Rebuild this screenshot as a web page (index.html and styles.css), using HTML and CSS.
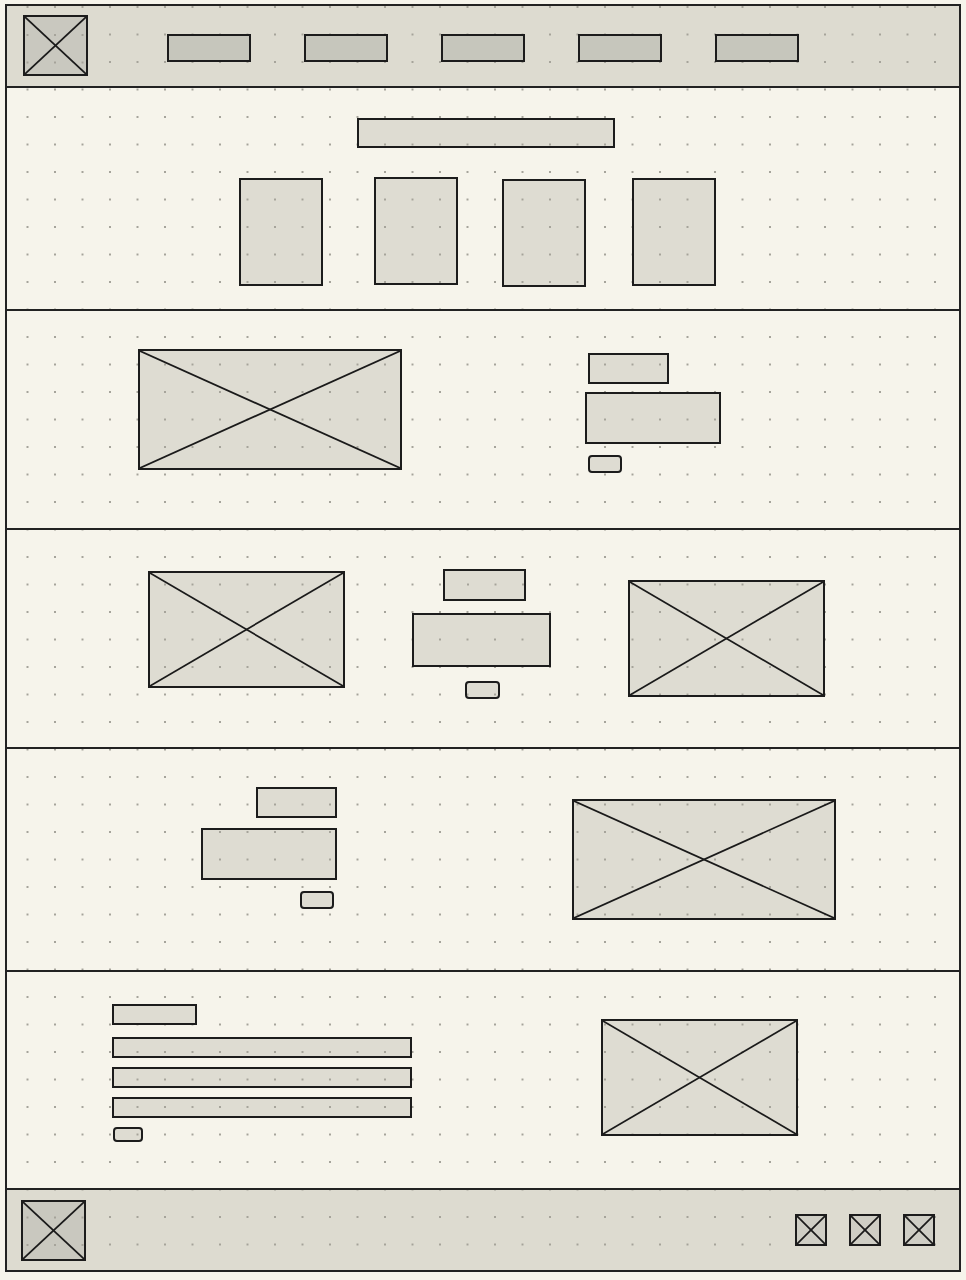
FILE: index.html
```html
<!DOCTYPE html>
<html lang="en">
<head>
    <meta charset="UTF-8">
    <meta name="viewport" content="width=device-width, initial-scale=1.0">
    <title>Wireframe</title>
    <link rel="stylesheet" href="styles.css">
</head>
<body>
    <div class="page">
        <header class="top-bar">
            <div class="box logo x-box">
                <svg viewBox="0 0 100 100" preserveAspectRatio="none"><line x1="0" y1="0" x2="100" y2="100"/><line x1="100" y1="0" x2="0" y2="100"/></svg>
            </div>
            <nav class="nav">
                <div class="box nav-item"></div>
                <div class="box nav-item"></div>
                <div class="box nav-item"></div>
                <div class="box nav-item"></div>
                <div class="box nav-item"></div>
            </nav>
        </header>

        <section class="section intro">
            <div class="box intro-title"></div>
            <div class="cards">
                <div class="box card"></div>
                <div class="box card"></div>
                <div class="box card"></div>
                <div class="box card"></div>
            </div>
        </section>

        <section class="section feature-one">
            <div class="box x-box wide-img">
                <svg viewBox="0 0 100 100" preserveAspectRatio="none"><line x1="0" y1="0" x2="100" y2="100"/><line x1="100" y1="0" x2="0" y2="100"/></svg>
            </div>
            <div class="text-group">
                <div class="box heading"></div>
                <div class="box paragraph"></div>
                <div class="box button"></div>
            </div>
        </section>

        <section class="section feature-two">
            <div class="box x-box mid-img">
                <svg viewBox="0 0 100 100" preserveAspectRatio="none"><line x1="0" y1="0" x2="100" y2="100"/><line x1="100" y1="0" x2="0" y2="100"/></svg>
            </div>
            <div class="text-group centered">
                <div class="box heading"></div>
                <div class="box paragraph"></div>
                <div class="box button"></div>
            </div>
            <div class="box x-box mid-img right-img">
                <svg viewBox="0 0 100 100" preserveAspectRatio="none"><line x1="0" y1="0" x2="100" y2="100"/><line x1="100" y1="0" x2="0" y2="100"/></svg>
            </div>
        </section>

        <section class="section feature-three">
            <div class="text-group right">
                <div class="box heading"></div>
                <div class="box paragraph"></div>
                <div class="box button"></div>
            </div>
            <div class="box x-box wide-img">
                <svg viewBox="0 0 100 100" preserveAspectRatio="none"><line x1="0" y1="0" x2="100" y2="100"/><line x1="100" y1="0" x2="0" y2="100"/></svg>
            </div>
        </section>

        <section class="section article">
            <div class="text-group list">
                <div class="box small-heading"></div>
                <div class="box line"></div>
                <div class="box line"></div>
                <div class="box line"></div>
                <div class="box button small"></div>
            </div>
            <div class="box x-box mid-img">
                <svg viewBox="0 0 100 100" preserveAspectRatio="none"><line x1="0" y1="0" x2="100" y2="100"/><line x1="100" y1="0" x2="0" y2="100"/></svg>
            </div>
        </section>

        <footer class="bottom-bar">
            <div class="box logo x-box">
                <svg viewBox="0 0 100 100" preserveAspectRatio="none"><line x1="0" y1="0" x2="100" y2="100"/><line x1="100" y1="0" x2="0" y2="100"/></svg>
            </div>
            <div class="socials">
                <div class="box x-box social"><svg viewBox="0 0 100 100" preserveAspectRatio="none"><line x1="0" y1="0" x2="100" y2="100"/><line x1="100" y1="0" x2="0" y2="100"/></svg></div>
                <div class="box x-box social"><svg viewBox="0 0 100 100" preserveAspectRatio="none"><line x1="0" y1="0" x2="100" y2="100"/><line x1="100" y1="0" x2="0" y2="100"/></svg></div>
                <div class="box x-box social"><svg viewBox="0 0 100 100" preserveAspectRatio="none"><line x1="0" y1="0" x2="100" y2="100"/><line x1="100" y1="0" x2="0" y2="100"/></svg></div>
            </div>
        </footer>
    </div>
</body>
</html>
```

FILE: styles.css
```css
* {
    box-sizing: border-box;
}
body {
    margin: 0;
    background-color: #f6f4eb;
    height: 1280px;
    overflow: hidden;
}
.page, .top-bar, .bottom-bar, .box {
    background-image: radial-gradient(circle, #a5a39a 0.9px, transparent 1.5px);
    background-size: 27.5px 27.5px;
    background-position: 13.75px -6.75px;
    background-attachment: fixed;
}
.page {
    margin: 4px 0 0 5px;
    width: 956px;
    border: 2px solid #222;
    background-color: #f6f4eb;
}
.box {
    border: 2px solid #1c1c1c;
    background-color: #dedcd2;
}
.x-box svg {
    display: block;
    width: 100%;
    height: 100%;
}
.x-box line {
    stroke: #1a1a1a;
    stroke-width: 1.7;
    vector-effect: non-scaling-stroke;
}

/* header */
.top-bar {
    height: 82px;
    display: flex;
    align-items: center;
    background-color: #dddbd0;
    border-bottom: 2px solid #222;
}
.logo {
    width: 65px;
    height: 61px;
    margin-left: 16px;
    background-color: #c9c8bf;
}
.top-bar .logo {
    margin-top: -2px;
}
.nav {
    display: flex;
    gap: 53px;
    margin: 4px 0 0 79px;
}
.nav-item {
    width: 84px;
    height: 28px;
    background-color: #c6c6bc;
}

/* sections */
.section {
    display: flex;
    align-items: flex-start;
    border-bottom: 2px solid #222;
}
.intro {
    height: 223px;
    flex-direction: column;
    align-items: flex-start;
    padding: 30px 0 0 350px;
}
.intro-title {
    width: 258px;
    height: 30px;
}
.cards {
    display: flex;
    align-items: flex-start;
    margin: 30px 0 0 -118px;
}
.card {
    width: 84px;
    height: 108px;
}
.card:nth-child(2) {
    margin: -1px 0 0 51px;
}
.card:nth-child(3) {
    margin: 1px 0 0 44px;
}
.card:nth-child(4) {
    margin-left: 46px;
}
.text-group {
    display: flex;
    flex-direction: column;
    align-items: flex-start;
}
.heading {
    width: 81px;
    height: 31px;
    margin-left: 3px;
}
.paragraph {
    width: 136px;
    height: 52px;
    margin-top: 8px;
}
.button {
    width: 34px;
    height: 18px;
    margin: 11px 0 0 3px;
    border-radius: 4px;
    border-width: 2.5px;
}
.wide-img {
    width: 264px;
    height: 121px;
}
.mid-img {
    width: 197px;
    height: 117px;
}

.feature-one {
    height: 219px;
    padding: 38px 0 0 131px;
}
.feature-one .text-group {
    margin: 4px 0 0 183px;
}

.feature-two {
    height: 219px;
    padding: 39px 0 0 141px;
}
.feature-two .mid-img {
    margin-top: 2px;
}
.feature-two .right-img {
    margin: 11px 0 0 77px;
}
.text-group.centered {
    width: 139px;
    margin-left: 67px;
    align-items: center;
}
.centered .heading {
    width: 83px;
    height: 32px;
    margin-left: 5px;
}
.centered .paragraph {
    width: 139px;
    height: 54px;
    margin-top: 12px;
}
.centered .button {
    width: 35px;
    margin: 14px 0 0 2px;
}

.feature-three {
    height: 223px;
    padding: 38px 0 0 194px;
}
.text-group.right {
    align-items: flex-end;
}
.right .heading {
    margin-left: 0;
}
.right .paragraph {
    margin-top: 10px;
}
.right .button {
    margin: 11px 3px 0 0;
}
.feature-three .wide-img {
    margin: 12px 0 0 235px;
}

.article {
    height: 218px;
    padding: 32px 0 0 105px;
}
.small-heading {
    width: 85px;
    height: 21px;
}
.line {
    width: 300px;
    height: 21px;
    margin-top: 9px;
}
.small-heading + .line {
    margin-top: 12px;
}
.button.small {
    width: 30px;
    height: 15px;
    margin: 9px 0 0 1px;
}
.article .mid-img {
    margin: 15px 0 0 189px;
    width: 197px;
    height: 117px;
}

/* footer */
.bottom-bar {
    height: 80px;
    display: flex;
    align-items: center;
    justify-content: space-between;
    background-color: #dddbd0;
}
.bottom-bar .logo {
    margin-left: 14px;
}
.socials {
    display: flex;
    align-items: center;
    gap: 22px;
    margin-right: 24px;
}
.social {
    width: 32px;
    height: 32px;
    background-color: #cfcec5;
}
```
